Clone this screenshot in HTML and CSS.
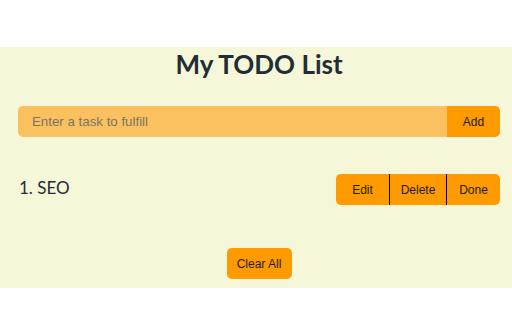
FILE: index.html
```html
<!DOCTYPE html>
<html>
<head>
<meta charset="utf-8">
<link rel="stylesheet" href="styles.css">
</head>
<body>
<div class="app">
  <h1 class="title">My TODO List</h1>
  <form class="add-form">
    <input class="task-input" type="text" placeholder="Enter a task to fulfill">
    <button class="btn add-btn" type="button">Add</button>
  </form>
  <ul class="list">
    <li class="item">
      <span class="item-text">1. SEO</span>
      <div class="actions">
        <button class="btn act" type="button">Edit</button>
        <button class="btn act" type="button">Delete</button>
        <button class="btn act" type="button">Done</button>
      </div>
    </li>
  </ul>
  <div class="footer">
    <button class="btn clear-btn" type="button">Clear All</button>
  </div>
</div>
</body>
</html>
```
FILE: styles.css
```css
html, body {
  margin: 0;
  padding: 0;
  background: #ffffff;
}
.app {
  margin-top: 47px;
  background: #f6f6d8;
  height: 241px;
  box-sizing: border-box;
  padding: 1px 12px 0 18px;
  display: flex;
  flex-direction: column;
}
.title {
  margin: 0;
  font-family: Lato, "Liberation Sans", sans-serif;
  font-weight: 700;
  font-size: 26px;
  line-height: 32px;
  color: #1f2d36;
  text-align: center;
}
.add-form {
  margin: 26px 0 0 0;
  display: flex;
  height: 31px;
}
.task-input {
  flex: 1;
  min-width: 0;
  border: none;
  outline: none;
  background: #fbc15e;
  border-radius: 5px 0 0 5px;
  padding: 0 14px;
  font-family: "Liberation Sans", Arial, sans-serif;
  font-size: 13.3px;
  color: #333;
}
.task-input::placeholder {
  color: #7a7468;
}
.btn {
  border: none;
  background: #ff9a00;
  font-family: "Liberation Sans", Arial, sans-serif;
  font-size: 12px;
  color: #1a1a1a;
  padding: 0;
  cursor: pointer;
}
.add-btn {
  width: 53px;
  border-radius: 0 5px 5px 0;
}
.list {
  list-style: none;
  margin: 37px 0 0 0;
  padding: 0;
}
.item {
  display: flex;
  align-items: flex-start;
  justify-content: space-between;
  height: 31px;
}
.item-text {
  font-family: Lato, "Liberation Sans", sans-serif;
  font-size: 17px;
  line-height: 20px;
  color: #1f2d36;
  padding: 4px 0 0 1px;
}
.actions {
  display: flex;
  height: 31px;
}
.act {
  height: 31px;
}
.act:nth-child(1) {
  width: 53px;
  border-radius: 5px 0 0 5px;
}
.act:nth-child(2) {
  width: 57px;
  border-left: 1px solid #000;
}
.act:nth-child(3) {
  width: 54px;
  border-left: 1px solid #000;
  border-radius: 0 5px 5px 0;
}
.footer {
  margin-top: 43px;
  display: flex;
  justify-content: center;
}
.clear-btn {
  width: 65px;
  height: 31px;
  border-radius: 5px;
}
```
